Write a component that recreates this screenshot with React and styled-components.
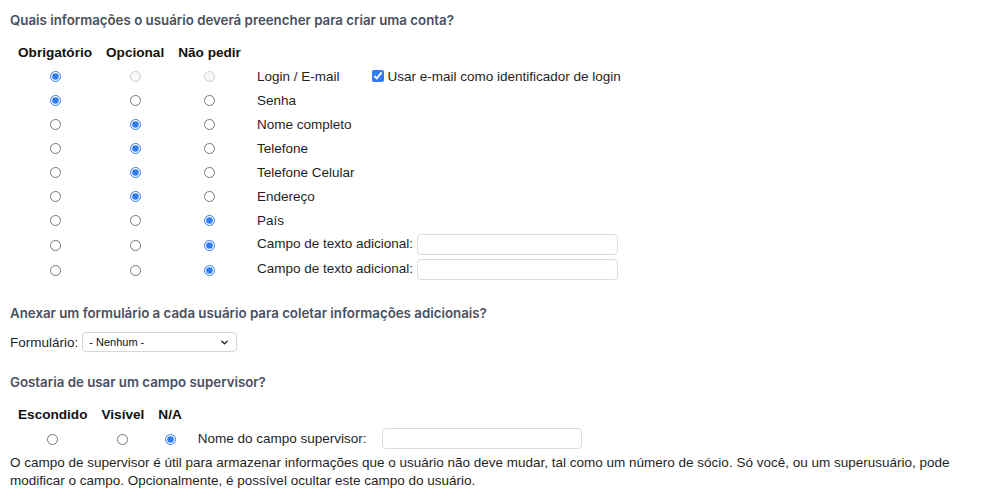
import styled, { createGlobalStyle } from 'styled-components';
import { ChevronDown } from 'lucide-react';

const GlobalStyle = createGlobalStyle`
  body {
    margin: 0;
    background: #fff;
    color: #1f1f1f;
    font-family: "Liberation Sans", Arial, sans-serif;
    font-size: 13.5px;
  }
`;

const Page = styled.div`
  padding: 12px 10px 0 10px;
  width: 950px;
`;

const Heading = styled.h3`
  margin: 0 0 ${(p) => p.$after || 14}px 0;
  font-family: Inter, "Liberation Sans", sans-serif;
  font-size: 13.3px;
  font-weight: 600;
  line-height: 17px;
  color: #4a5060;
`;

const Table = styled.table`
  border-collapse: collapse;
  margin-left: 1px;
`;

const HeadCell = styled.th`
  padding: 0 7px;
  height: 24px;
  font-size: 13.6px;
  font-weight: bold;
  color: #111;
  text-align: center;
  white-space: nowrap;
`;

const Cell = styled.td`
  padding: 0 7px 0 ${(p) => (p.$label ? 9 : 7)}px;
  height: ${(p) => (p.$tall ? 25 : 24)}px;
  text-align: ${(p) => (p.$center ? 'center' : 'left')};
  white-space: nowrap;
  vertical-align: middle;
`;

const Radio = styled.input.attrs({ type: 'radio' })`
  width: 11px;
  height: 11px;
  margin: 0;
  vertical-align: middle;
  accent-color: #2f7bf5;
`;

const Check = styled.input.attrs({ type: 'checkbox' })`
  width: 12px;
  height: 12px;
  margin: 0 3px 0 0;
  vertical-align: -1px;
  accent-color: #2f7bf5;
`;

const Inline = styled.span`
  margin-left: 33px;
`;

const TextBox = styled.input.attrs({ type: 'text' })`
  box-sizing: border-box;
  width: ${(p) => p.$w || 201}px;
  height: 21px;
  margin: 0 0 0 ${(p) => p.$ml || 2}px;
  border: 1px solid #dcdcdc;
  border-radius: 4px;
  background: #fff;
  vertical-align: middle;
  outline: none;
`;

const Section = styled.div`
  margin-top: ${(p) => p.$top || 0}px;
`;

const FieldRow = styled.div`
  display: flex;
  align-items: center;
  gap: 4px;
  height: 22px;
`;

const SelectWrap = styled.div`
  position: relative;
  width: 155px;
  height: 20px;
`;

const Select = styled.select`
  box-sizing: border-box;
  appearance: none;
  width: 100%;
  height: 100%;
  padding: 0 20px 0 6px;
  border: 1px solid #d6d6d6;
  border-radius: 4px;
  background: #fff;
  font-family: "Liberation Sans", Arial, sans-serif;
  font-size: 11px;
  color: #111;
`;

const Chevron = styled(ChevronDown)`
  position: absolute;
  right: 7px;
  top: 5px;
  pointer-events: none;
`;

const Note = styled.p`
  margin: 3px 0 0 0;
  line-height: 18px;
`;

const fields = [
  { label: 'Login / E-mail', value: 'req', locked: true, extra: 'check' },
  { label: 'Senha', value: 'req' },
  { label: 'Nome completo', value: 'opt' },
  { label: 'Telefone', value: 'opt' },
  { label: 'Telefone Celular', value: 'opt' },
  { label: 'Endereço', value: 'opt' },
  { label: 'País', value: 'no' },
  { label: 'Campo de texto adicional:', value: 'no', extra: 'input' },
  { label: 'Campo de texto adicional:', value: 'no', extra: 'input' }
];

const choices = ['req', 'opt', 'no'];

export default function App() {
  return (
    <Page>
      <GlobalStyle />
      <Heading $after={11}>Quais informações o usuário deverá preencher para criar uma conta?</Heading>
      <Table>
        <thead>
          <tr>
            <HeadCell>Obrigatório</HeadCell>
            <HeadCell>Opcional</HeadCell>
            <HeadCell>Não pedir</HeadCell>
            <HeadCell />
          </tr>
        </thead>
        <tbody>
          {fields.map((f, i) => (
            <tr key={i}>
              {choices.map((c) => (
                <Cell $center key={c} $tall={f.extra === 'input'}>
                  <Radio
                    name={`field-${i}`}
                    defaultChecked={f.value === c}
                    disabled={f.locked && c !== 'req'}
                  />
                </Cell>
              ))}
              <Cell $label $tall={f.extra === 'input'}>
                {f.label}
                {f.extra === 'check' && (
                  <Inline>
                    <Check defaultChecked />
                    Usar e-mail como identificador de login
                  </Inline>
                )}
                {f.extra === 'input' && <TextBox $ml={4} />}
              </Cell>
            </tr>
          ))}
        </tbody>
      </Table>

      <Section $top={23}>
        <Heading $after={9}>Anexar um formulário a cada usuário para coletar informações adicionais?</Heading>
        <FieldRow>
          Formulário:
          <SelectWrap>
            <Select defaultValue="none">
              <option value="none">- Nenhum -</option>
            </Select>
            <Chevron size={11} strokeWidth={3} color="#111" />
          </SelectWrap>
        </FieldRow>
      </Section>

      <Section $top={21}>
        <Heading $after={11}>Gostaria de usar um campo supervisor?</Heading>
        <Table>
          <thead>
            <tr>
              <HeadCell>Escondido</HeadCell>
              <HeadCell>Visível</HeadCell>
              <HeadCell>N/A</HeadCell>
              <HeadCell />
              <HeadCell />
            </tr>
          </thead>
          <tbody>
            <tr>
              <Cell $center>
                <Radio name="supervisor" />
              </Cell>
              <Cell $center>
                <Radio name="supervisor" />
              </Cell>
              <Cell $center>
                <Radio name="supervisor" defaultChecked />
              </Cell>
              <Cell $label>Nome do campo supervisor:</Cell>
              <Cell $tall>
                <TextBox $ml={1} $w={200} />
              </Cell>
            </tr>
          </tbody>
        </Table>
        <Note>
          O campo de supervisor é útil para armazenar informações que o usuário não deve mudar, tal como um número de
          sócio. Só você, ou um superusuário, pode modificar o campo. Opcionalmente, é possível ocultar este campo do
          usuário.
        </Note>
      </Section>
    </Page>
  );
}
